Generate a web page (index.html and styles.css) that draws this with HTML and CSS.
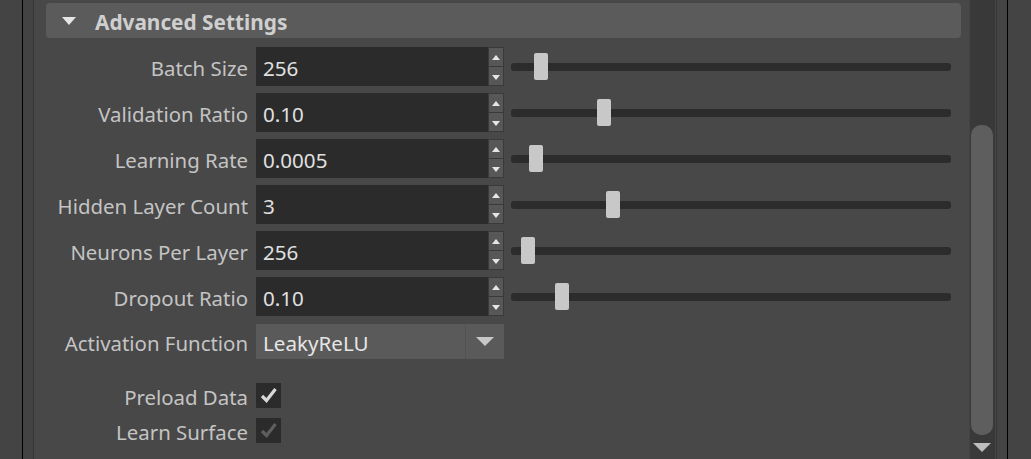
FILE: index.html
```html
<!DOCTYPE html>
<html>
<head>
<meta charset="utf-8">
<link rel="stylesheet" href="styles.css">
</head>
<body>
<div class="app">
  <div class="outliner"></div>
  <div class="gutter"></div>
  <div class="editor">
    <div class="section-header">
      <span class="caret"></span>
      <span class="section-title">Advanced Settings</span>
    </div>
    <div class="form">
      <div class="row">
        <label class="label">Batch Size</label>
        <div class="field"><span class="value">256</span></div>
        <div class="spin"><div class="spin-btn up"></div><div class="spin-btn down"></div></div>
        <div class="slider"><div class="track"></div><div class="thumb" style="left: 23px"></div></div>
      </div>
      <div class="row">
        <label class="label">Validation Ratio</label>
        <div class="field"><span class="value">0.10</span></div>
        <div class="spin"><div class="spin-btn up"></div><div class="spin-btn down"></div></div>
        <div class="slider"><div class="track"></div><div class="thumb" style="left: 86px"></div></div>
      </div>
      <div class="row">
        <label class="label">Learning Rate</label>
        <div class="field"><span class="value">0.0005</span></div>
        <div class="spin"><div class="spin-btn up"></div><div class="spin-btn down"></div></div>
        <div class="slider"><div class="track"></div><div class="thumb" style="left: 18px"></div></div>
      </div>
      <div class="row">
        <label class="label">Hidden Layer Count</label>
        <div class="field"><span class="value">3</span></div>
        <div class="spin"><div class="spin-btn up"></div><div class="spin-btn down"></div></div>
        <div class="slider"><div class="track"></div><div class="thumb" style="left: 95px"></div></div>
      </div>
      <div class="row">
        <label class="label">Neurons Per Layer</label>
        <div class="field"><span class="value">256</span></div>
        <div class="spin"><div class="spin-btn up"></div><div class="spin-btn down"></div></div>
        <div class="slider"><div class="track"></div><div class="thumb" style="left: 10px"></div></div>
      </div>
      <div class="row">
        <label class="label">Dropout Ratio</label>
        <div class="field"><span class="value">0.10</span></div>
        <div class="spin"><div class="spin-btn up"></div><div class="spin-btn down"></div></div>
        <div class="slider"><div class="track"></div><div class="thumb" style="left: 44px"></div></div>
      </div>
      <div class="row row-combo">
        <label class="label">Activation Function</label>
        <div class="combo">
          <span class="combo-text">LeakyReLU</span>
          <span class="combo-arrow"></span>
        </div>
      </div>
      <div class="row row-check first-check">
        <label class="label">Preload Data</label>
        <div class="check">
          <svg width="25" height="25" viewBox="0 0 25 25"><path d="M6 13 L10.5 17.5 L19.5 6" fill="none" stroke="#d8d8d8" stroke-width="3.2"/></svg>
        </div>
      </div>
      <div class="row row-check">
        <label class="label">Learn Surface</label>
        <div class="check">
          <svg width="25" height="25" viewBox="0 0 25 25"><path d="M6 13 L10.5 17.5 L19.5 6" fill="none" stroke="#5e5e5e" stroke-width="3.2"/></svg>
        </div>
      </div>
    </div>
  </div>
  <div class="scrollbar">
    <div class="sb-thumb"></div>
    <div class="sb-arrow"></div>
  </div>
  <div class="right-strip"></div>
  <div class="right-gap"></div>
  <div class="right-end"></div>
</div>
</body>
</html>
```

FILE: styles.css
```css
html, body {
  margin: 0;
  padding: 0;
  background: #444444;
}
body {
  font-family: "Noto Sans", "Open Sans", sans-serif;
  color: #c6c6c6;
}
.app {
  display: flex;
  width: 1031px;
  height: 459px;
  overflow: hidden;
}
.outliner {
  width: 22px;
  background: #444444;
  border-right: 1px solid #000;
}
.gutter {
  width: 10px;
  background: #434343;
  border-right: 1px solid #363636;
}
.editor {
  width: 915px;
  flex: none;
  background: #484848;
  padding: 3px 8px 0 12px;
}
.section-header {
  height: 35px;
  background: #5b5b5b;
  border-radius: 4px;
  display: flex;
  align-items: center;
  padding-left: 16px;
}
.caret {
  width: 0;
  height: 0;
  border-left: 7px solid transparent;
  border-right: 7px solid transparent;
  border-top: 8px solid #e6e6e6;
  margin-top: 1px;
}
.section-title {
  margin-left: 19px;
  font-weight: bold;
  font-size: 20.8px;
  color: #cfcfcf;
  line-height: 35px;
  padding-top: 3px;
}
.form {
  display: flex;
  flex-direction: column;
  padding-top: 9px;
}
.row {
  display: flex;
  align-items: center;
  height: 39px;
  margin-bottom: 7px;
}
.label {
  width: 202px;
  flex: none;
  text-align: right;
  font-size: 20.4px;
  color: #c4c4c4;
  margin-right: 8px;
  white-space: nowrap;
  padding-top: 3px;
}
.field {
  width: 232px;
  height: 39px;
  background: #2b2b2b;
  display: flex;
  align-items: center;
  padding-left: 7px;
  box-sizing: border-box;
}
.value {
  font-size: 20.6px;
  color: #e0e0e0;
  padding-top: 3px;
}
.spin {
  width: 16px;
  height: 39px;
  display: flex;
  flex-direction: column;
}
.spin-btn {
  flex: 1;
  background: #575757;
  border: 1px solid #3a3a3a;
  position: relative;
}
.spin-btn.up { border-bottom-width: 0; }
.spin-btn::after {
  content: "";
  position: absolute;
  left: 3px;
  top: 7px;
  width: 0;
  height: 0;
  border-left: 4px solid transparent;
  border-right: 4px solid transparent;
}
.spin-btn.up::after { border-bottom: 5px solid #e6e6e6; }
.spin-btn.down::after { border-top: 5px solid #e6e6e6; top: 8px; }
.slider {
  position: relative;
  width: 440px;
  height: 39px;
  margin-left: 7px;
  display: flex;
  align-items: center;
}
.track {
  width: 440px;
  height: 8px;
  background: #2c2c2c;
  border-radius: 3px;
}
.thumb {
  position: absolute;
  top: 6px;
  width: 14px;
  height: 27px;
  background: #c8c8c8;
  border-radius: 2px;
}
.row-combo {
  height: 35px;
  margin-top: 1px;
  margin-bottom: 24px;
}
.combo {
  width: 248px;
  height: 35px;
  background: #5a5a5a;
  display: flex;
  align-items: center;
}
.combo-text {
  flex: 1;
  padding-left: 7px;
  font-size: 20.6px;
  color: #e6e6e6;
  height: 35px;
  line-height: 38px;
  border-right: 1px solid #525252;
}
.combo-arrow {
  width: 38px;
  display: flex;
  justify-content: center;
}
.combo-arrow::after {
  content: "";
  width: 0;
  height: 0;
  border-left: 9px solid transparent;
  border-right: 9px solid transparent;
  border-top: 9px solid #c8c8c8;
}
.row-check {
  height: 25px;
  margin-bottom: 10px;
}
.check {
  width: 25px;
  height: 25px;
  background: #2b2b2b;
}
.check svg { display: block; }
.scrollbar {
  width: 25px;
  margin-left: 1px;
  background: #393939;
  position: relative;
}
.sb-thumb {
  position: absolute;
  left: 1px;
  top: 125px;
  width: 22px;
  height: 310px;
  background: #5e5e5e;
  border-radius: 10px;
}
.sb-arrow {
  position: absolute;
  left: 3px;
  top: 443px;
  width: 0;
  height: 0;
  border-left: 9px solid transparent;
  border-right: 9px solid transparent;
  border-top: 9px solid #bdbdbd;
}
.right-strip {
  width: 1px;
  background: #474747;
  border-right: 1px solid #353535;
}
.right-gap {
  width: 10px;
  background: #444444;
  border-right: 1px solid #000;
}
.right-end {
  flex: 1;
  background: #444444;
}
```
